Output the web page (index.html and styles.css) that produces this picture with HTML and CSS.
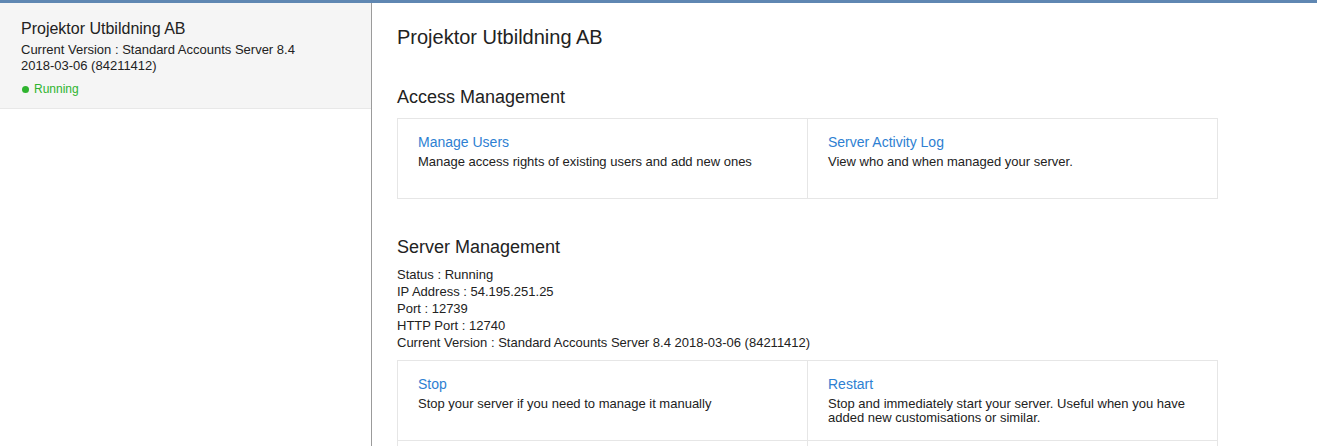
FILE: index.html
```html
<!DOCTYPE html>
<html>
<head>
<meta charset="utf-8">
<link rel="stylesheet" href="styles.css">
</head>
<body>
<div class="topbar"></div>
<div class="layout">
  <aside class="sidebar">
    <div class="server-item">
      <div class="server-name">Projektor Utbildning AB</div>
      <div class="server-version">Current Version : Standard Accounts Server 8.4<br>2018-03-06 (84211412)</div>
      <div class="server-status"><span class="dot"></span>Running</div>
    </div>
  </aside>
  <main class="main">
    <h1 class="title">Projektor Utbildning AB</h1>

    <h2 class="section-title">Access Management</h2>
    <div class="card-grid">
      <div class="card">
        <a class="card-link" href="#">Manage Users</a>
        <div class="card-desc">Manage access rights of existing users and add new ones</div>
      </div>
      <div class="card">
        <a class="card-link" href="#">Server Activity Log</a>
        <div class="card-desc">View who and when managed your server.</div>
      </div>
    </div>

    <h2 class="section-title section-gap">Server Management</h2>
    <div class="info">
      <div>Status : Running</div>
      <div>IP Address : 54.195.251.25</div>
      <div>Port : 12739</div>
      <div>HTTP Port : 12740</div>
      <div>Current Version : Standard Accounts Server 8.4 2018-03-06 (84211412)</div>
    </div>
    <div class="card-grid card-grid-server">
      <div class="card">
        <a class="card-link" href="#">Stop</a>
        <div class="card-desc">Stop your server if you need to manage it manually</div>
      </div>
      <div class="card">
        <a class="card-link" href="#">Restart</a>
        <div class="card-desc">Stop and immediately start your server. Useful when you have added new customisations or similar.</div>
      </div>
      <div class="card"></div>
      <div class="card"></div>
    </div>
  </main>
</div>
</body>
</html>
```

FILE: styles.css
```css
html, body {
  margin: 0;
  padding: 0;
  background: #fff;
}
body {
  font-family: "Liberation Sans", Arial, Helvetica, sans-serif;
  color: #333;
  height: 446px;
  overflow: hidden;
  display: flex;
  flex-direction: column;
}
.topbar {
  height: 3px;
  background: #5f87b2;
  flex: none;
}
.layout {
  flex: 1;
  display: flex;
  min-height: 0;
}
.sidebar {
  width: 371px;
  flex: none;
  border-right: 1px solid #9b9b9b;
  background: #fff;
}
.server-item {
  background: #f5f5f5;
  border-bottom: 1px solid #e8e8e8;
  padding: 16px 20px 11px 21px;
}
.server-name {
  font-size: 16px;
  line-height: 20px;
  color: #222;
  margin-bottom: 3px;
}
.server-version {
  font-size: 13px;
  line-height: 16px;
  color: #222;
}
.server-status {
  margin-top: 7px;
  font-size: 12px;
  line-height: 16px;
  color: #2fb42f;
  display: flex;
  align-items: center;
}
.dot {
  width: 7px;
  height: 7px;
  border-radius: 50%;
  background: #2fb42f;
  margin: 0 5px 0 1px;
}
.main {
  flex: 1;
  padding: 22px 25px 0 25px;
  min-width: 0;
}
.title {
  font-size: 20px;
  line-height: 24px;
  font-weight: normal;
  margin: 0 0 37px 0;
  color: #222;
}
.section-title {
  font-size: 18px;
  line-height: 22px;
  font-weight: normal;
  margin: 0 0 10px 0;
  color: #222;
}
.section-gap {
  margin-top: 37px;
  margin-bottom: 8px;
}
.card-grid {
  width: 821px;
  box-sizing: border-box;
  display: grid;
  grid-template-columns: 1fr 1fr;
  border-top: 1px solid #e6e6e6;
  border-left: 1px solid #e6e6e6;
}
.card {
  border-right: 1px solid #e6e6e6;
  border-bottom: 1px solid #e6e6e6;
  padding: 14px 20px 0 20px;
  height: 80px;
  box-sizing: border-box;
}
.card-link {
  display: block;
  font-size: 14px;
  line-height: 18px;
  color: #2e7fd2;
  text-decoration: none;
  margin-bottom: 4px;
}
.card-desc {
  font-size: 13px;
  line-height: 14px;
  color: #222;
}
.info {
  font-size: 13px;
  line-height: 17px;
  color: #222;
  margin-bottom: 9px;
}
```
